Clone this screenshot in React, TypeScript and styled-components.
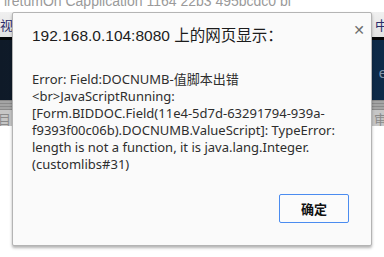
import styled, { createGlobalStyle } from "styled-components";

const Global = createGlobalStyle`
  html, body {
    margin: 0;
    padding: 0;
    background: #ffffff;
    font-family: "Liberation Sans", "Noto Sans CJK SC", sans-serif;
  }
`;

const Page = styled.div`
  position: relative;
  width: 384px;
  height: 257px;
  overflow: hidden;
  display: flex;
  flex-direction: column;
`;

const AddressBit = styled.div`
  height: 12px;
  background: #fff;
  color: #9a9a9a;
  font-size: 14px;
  line-height: 12px;
  white-space: nowrap;
  overflow: hidden;
  padding-left: 4px;
  & span {
    display: block;
    margin-top: -5px;
  }
`;

const Toolbar = styled.div`
  height: 25px;
  background: linear-gradient(#f0f0f0, #e2e2e2);
  display: flex;
  justify-content: space-between;
  align-items: center;
  font-size: 13px;
  color: #2b2b6a;
  & span:last-child {
    margin-right: -4px;
  }
`;

const DarkBand = styled.div`
  height: 63px;
  border-top: 3px solid #050608;
  background: linear-gradient(90deg, #0f1a28, #13263c 70%, #0d2a48);
  display: flex;
  justify-content: flex-end;
  align-items: flex-start;
  color: #7f93aa;
  font-size: 15px;
  padding-top: 24px;
  box-sizing: border-box;
  & span {
    margin-right: -3px;
  }
`;

const Stripes = styled.div`
  height: 10px;
  background: repeating-linear-gradient(#8a8a8a 0 1px, #a4a4a4 1px 3px);
`;

const TabStrip = styled.div`
  height: 16px;
  background: #c6c6c6;
  display: flex;
  justify-content: space-between;
  align-items: center;
  color: #8a8a8a;
  font-size: 13px;
  & span:first-child {
    margin-left: -2px;
  }
  & span:last-child {
    margin-right: -3px;
  }
`;

const Rest = styled.div`
  flex: 1;
  background: #ffffff;
`;

const Dialog = styled.div`
  position: absolute;
  left: 12px;
  top: 12px;
  width: 360px;
  height: 234px;
  box-sizing: border-box;
  background: #fafafa;
  border: 1px solid #b4b4b4;
  border-radius: 2px;
  box-shadow: 0 2px 3px rgba(0, 0, 0, 0.3);
  padding: 0 19px;
  display: flex;
  flex-direction: column;
`;

const TitleRow = styled.div`
  display: flex;
  justify-content: space-between;
  align-items: flex-start;
  padding-top: 13px;
  height: 35px;
  box-sizing: border-box;
`;

const Title = styled.div`
  font-size: 15.5px;
  color: #1c1c1c;
  line-height: 20px;
`;

const Close = styled.div`
  font-family: "DejaVu Sans", sans-serif;
  font-size: 14px;
  font-weight: bold;
  color: #6e6e6e;
  line-height: 14px;
  margin-right: -13px;
  margin-top: -3px;
`;

const Message = styled.div`
  margin-top: 23px;
  font-family: "Noto Sans", "Noto Sans CJK SC", sans-serif;
  font-size: 13px;
  line-height: 17px;
  color: #2e2e2e;
  white-space: pre;
`;

const Footer = styled.div`
  margin-top: auto;
  margin-bottom: 22px;
  display: flex;
  justify-content: flex-end;
  margin-right: 3px;
`;

const OkButton = styled.button`
  width: 70px;
  height: 29px;
  background: #fbfbfb;
  border: 1px solid #4b8cf0;
  border-radius: 2px;
  font-family: "Noto Sans CJK SC", sans-serif;
  font-size: 13px;
  font-weight: bold;
  color: #111;
  padding: 0;
`;

const message = `Error: Field:DOCNUMB-值脚本出错
<br>JavaScriptRunning:
[Form.BIDDOC.Field(11e4-5d7d-63291794-939a-
f9393f00c06b).DOCNUMB.ValueScript]: TypeError:
length is not a function, it is java.lang.Integer.
(customlibs#31)`;

export default function App() {
  return (
    <Page>
      <Global />
      <AddressBit>
        <span>{"iretumOn   Capplication   1164 22b3 495bcdc0 bl"}</span>
      </AddressBit>
      <Toolbar>
        <span>视</span>
        <span>中</span>
      </Toolbar>
      <DarkBand>
        <span>e</span>
      </DarkBand>
      <Stripes />
      <TabStrip>
        <span>目</span>
        <span>审</span>
      </TabStrip>
      <Rest />
      <Dialog>
        <TitleRow>
          <Title>192.168.0.104:8080 上的网页显示：</Title>
          <Close>✕</Close>
        </TitleRow>
        <Message>{message}</Message>
        <Footer>
          <OkButton>确定</OkButton>
        </Footer>
      </Dialog>
    </Page>
  );
}
